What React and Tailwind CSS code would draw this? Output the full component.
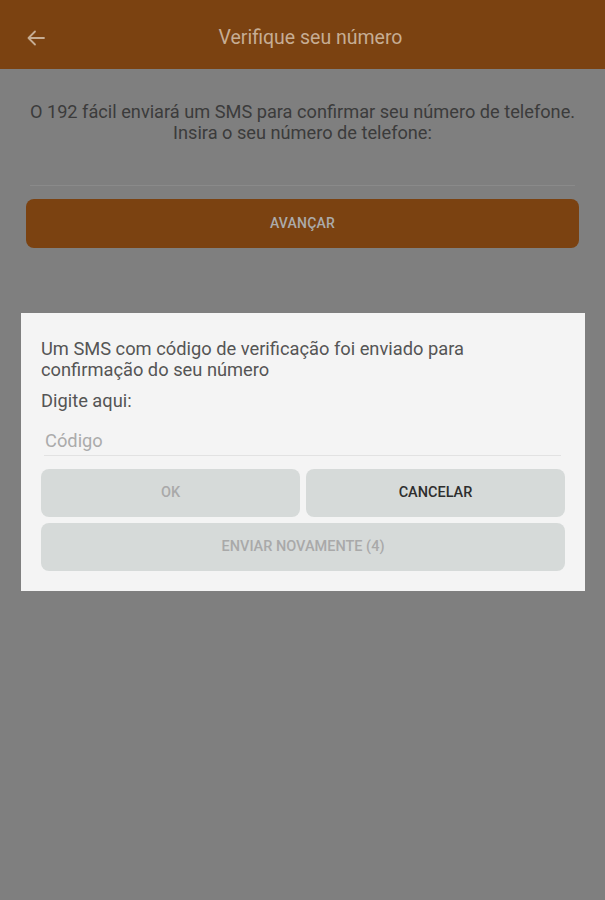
export default function App() {
  return (
    <div className="relative w-[605px] h-[900px] bg-[#7f7f7f] overflow-hidden" style={{ fontFamily: 'Roboto, "Noto Sans", sans-serif' }}>
      <header className="h-[69px] bg-[#7b4211] flex items-center relative pt-[6px]">
        <div className="w-[72px] flex items-center pl-[27px]">
          <svg width="18" height="16" viewBox="0 0 18 16" fill="none" stroke="#c6ad94" strokeWidth="1.8" strokeLinecap="round" strokeLinejoin="round">
            <path d="M17 8H1.5M8 1.5L1.5 8L8 14.5" />
          </svg>
        </div>
        <div className="absolute inset-0 pt-[7px] pl-[16px] flex items-center justify-center pointer-events-none">
          <span className="text-[19.5px] text-[#c6ad94]">Verifique seu número</span>
        </div>
      </header>

      <div className="pt-[32px] text-center text-[18.2px] leading-[21px] text-[#3b3b3b]">
        <p>O 192 fácil enviará um SMS para confirmar seu número de telefone.</p>
        <p>Insira o seu número de telefone:</p>
      </div>

      <div className="mx-[30px] mt-[42px] h-px bg-[#8a8a8a]" />

      <div className="mx-[26px] mt-[13px] h-[49px] rounded-[8px] bg-[#7b4211] flex items-center justify-center">
        <span className="text-[14px] font-medium text-[#ababab] tracking-[0.2px]">AVANÇAR</span>
      </div>

      <div className="absolute left-[21px] top-[313px] w-[564px] bg-[#f4f4f4] px-[20px] pt-[25px] pb-[20px]">
        <p className="max-w-[470px] text-[18.3px] leading-[21px] text-[#555555]">
          Um SMS com código de verificação foi enviado para confirmação do seu número
        </p>
        <p className="mt-[10px] text-[18.3px] leading-[21px] text-[#555555]">Digite aqui:</p>
        <div className="mt-[19px] ml-[3px] mr-[4px] pb-[4px] border-b border-[#e2e2e2]">
          <span className="block pl-[1px] text-[18.3px] leading-[21px] text-[#ababab]">Código</span>
        </div>
        <div className="mt-[13px] grid grid-cols-2 gap-[6px]">
          <div className="h-[48px] rounded-[8px] bg-[#d6dad9] flex items-center justify-center">
            <span className="text-[14.5px] font-medium text-[#a9a9a9]">OK</span>
          </div>
          <div className="h-[48px] rounded-[8px] bg-[#d6dad9] flex items-center justify-center">
            <span className="text-[14.5px] font-medium text-[#2e2e2e]">CANCELAR</span>
          </div>
        </div>
        <div className="mt-[6px] h-[48px] rounded-[8px] bg-[#d6dad9] flex items-center justify-center">
          <span className="text-[14.5px] font-medium text-[#a9a9a9]">ENVIAR NOVAMENTE (4)</span>
        </div>
      </div>
    </div>
  );
}
